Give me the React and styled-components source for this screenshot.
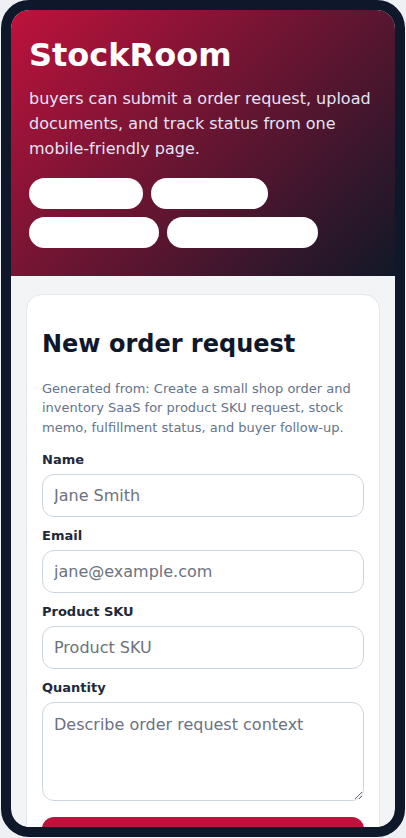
import React from 'react';
import styled, { createGlobalStyle } from 'styled-components';

const GlobalStyle = createGlobalStyle`
  html, body {
    margin: 0;
    padding: 0;
    background: #eef0f4;
    font-family: "DejaVu Sans", Verdana, sans-serif;
  }
  * {
    box-sizing: border-box;
  }
`;

const Device = styled.div`
  width: 404px;
  height: 837px;
  margin: 0 auto;
  border: 10px solid #0f172a;
  border-radius: 28px;
  background: #0f172a;
  overflow: hidden;
`;

const Screen = styled.div`
  height: 100%;
  border-radius: 18px;
  overflow: hidden;
  background: #f3f4f6;
`;

const Hero = styled.header`
  padding: 26px 18px 28px;
  background: linear-gradient(135deg, #be123c 0%, #111827 100%);
  color: #fff;
`;

const Brand = styled.h1`
  margin: 0;
  font-size: 32px;
  line-height: 1.2;
  font-weight: 700;
`;

const Tagline = styled.p`
  margin: 13px 0 17px;
  font-size: 16px;
  line-height: 24.6px;
  color: #e3e4f6;
`;

const Chips = styled.div`
  display: flex;
  flex-wrap: wrap;
  gap: 8px;
`;

const Chip = styled.span`
  display: block;
  width: ${(p) => p.$w}px;
  height: 31px;
  border-radius: 999px;
  background: #fff;
`;

const Body = styled.main`
  padding: 18px 15px;
`;

const Card = styled.section`
  background: #fff;
  border: 1px solid #e2e8f0;
  border-radius: 16px;
  padding: 15px;
`;

const Title = styled.h2`
  margin: 20px 0;
  font-size: 24px;
  line-height: 1.2;
  font-weight: 700;
  color: #0f172a;
`;

const Note = styled.p`
  margin: 0 0 15px;
  font-size: 13px;
  line-height: 19.5px;
  color: #64748b;
`;

const Form = styled.form`
  display: flex;
  flex-direction: column;
  gap: 11px;
`;

const Field = styled.div`
  display: flex;
  flex-direction: column;
`;

const Label = styled.label`
  display: block;
  margin-bottom: 6px;
  font-size: 13px;
  line-height: 16px;
  font-weight: 700;
  color: #1e293b;
`;

const inputBase = `
  width: 100%;
  border: 1px solid #cbd5e1;
  border-radius: 12px;
  background: #fff;
  font-family: "DejaVu Sans", Verdana, sans-serif;
  font-size: 16px;
  color: #0f172a;
  outline: none;
  &::placeholder {
    color: #6b7280;
  }
`;

const Input = styled.input`
  ${inputBase}
  height: 43px;
  padding: 0 11px;
`;

const TextArea = styled.textarea`
  ${inputBase}
  height: 99px;
  padding: 12px 11px;
  line-height: normal;
`;

const Submit = styled.button`
  margin-top: 5px;
  height: 46px;
  border: none;
  border-radius: 12px;
  background: #be123c;
  color: #fff;
  font-family: "DejaVu Sans", Verdana, sans-serif;
  font-size: 16px;
  font-weight: 700;
`;

const chips = [114, 117, 130, 151];

const fields = [
  { id: 'name', label: 'Name', placeholder: 'Jane Smith' },
  { id: 'email', label: 'Email', placeholder: 'jane@example.com', type: 'email' },
  { id: 'sku', label: 'Product SKU', placeholder: 'Product SKU' },
];

export default function App() {
  return (
    <>
      <GlobalStyle />
      <Device>
        <Screen>
          <Hero>
            <Brand>StockRoom</Brand>
            <Tagline>
              buyers can submit a order request, upload documents, and track status from one
              mobile-friendly page.
            </Tagline>
            <Chips>
              {chips.map((w, i) => (
                <Chip key={i} $w={w} />
              ))}
            </Chips>
          </Hero>
          <Body>
            <Card>
              <Title>New order request</Title>
              <Note>
                Generated from: Create a small shop order and inventory SaaS for product SKU
                request, stock memo, fulfillment status, and buyer follow-up.
              </Note>
              <Form onSubmit={(e) => e.preventDefault()}>
                {fields.map((f) => (
                  <Field key={f.id}>
                    <Label htmlFor={f.id}>{f.label}</Label>
                    <Input id={f.id} type={f.type || 'text'} placeholder={f.placeholder} />
                  </Field>
                ))}
                <Field>
                  <Label htmlFor="quantity">Quantity</Label>
                  <TextArea id="quantity" placeholder="Describe order request context" />
                </Field>
                <Submit type="submit">Submit request</Submit>
              </Form>
            </Card>
          </Body>
        </Screen>
      </Device>
    </>
  );
}
